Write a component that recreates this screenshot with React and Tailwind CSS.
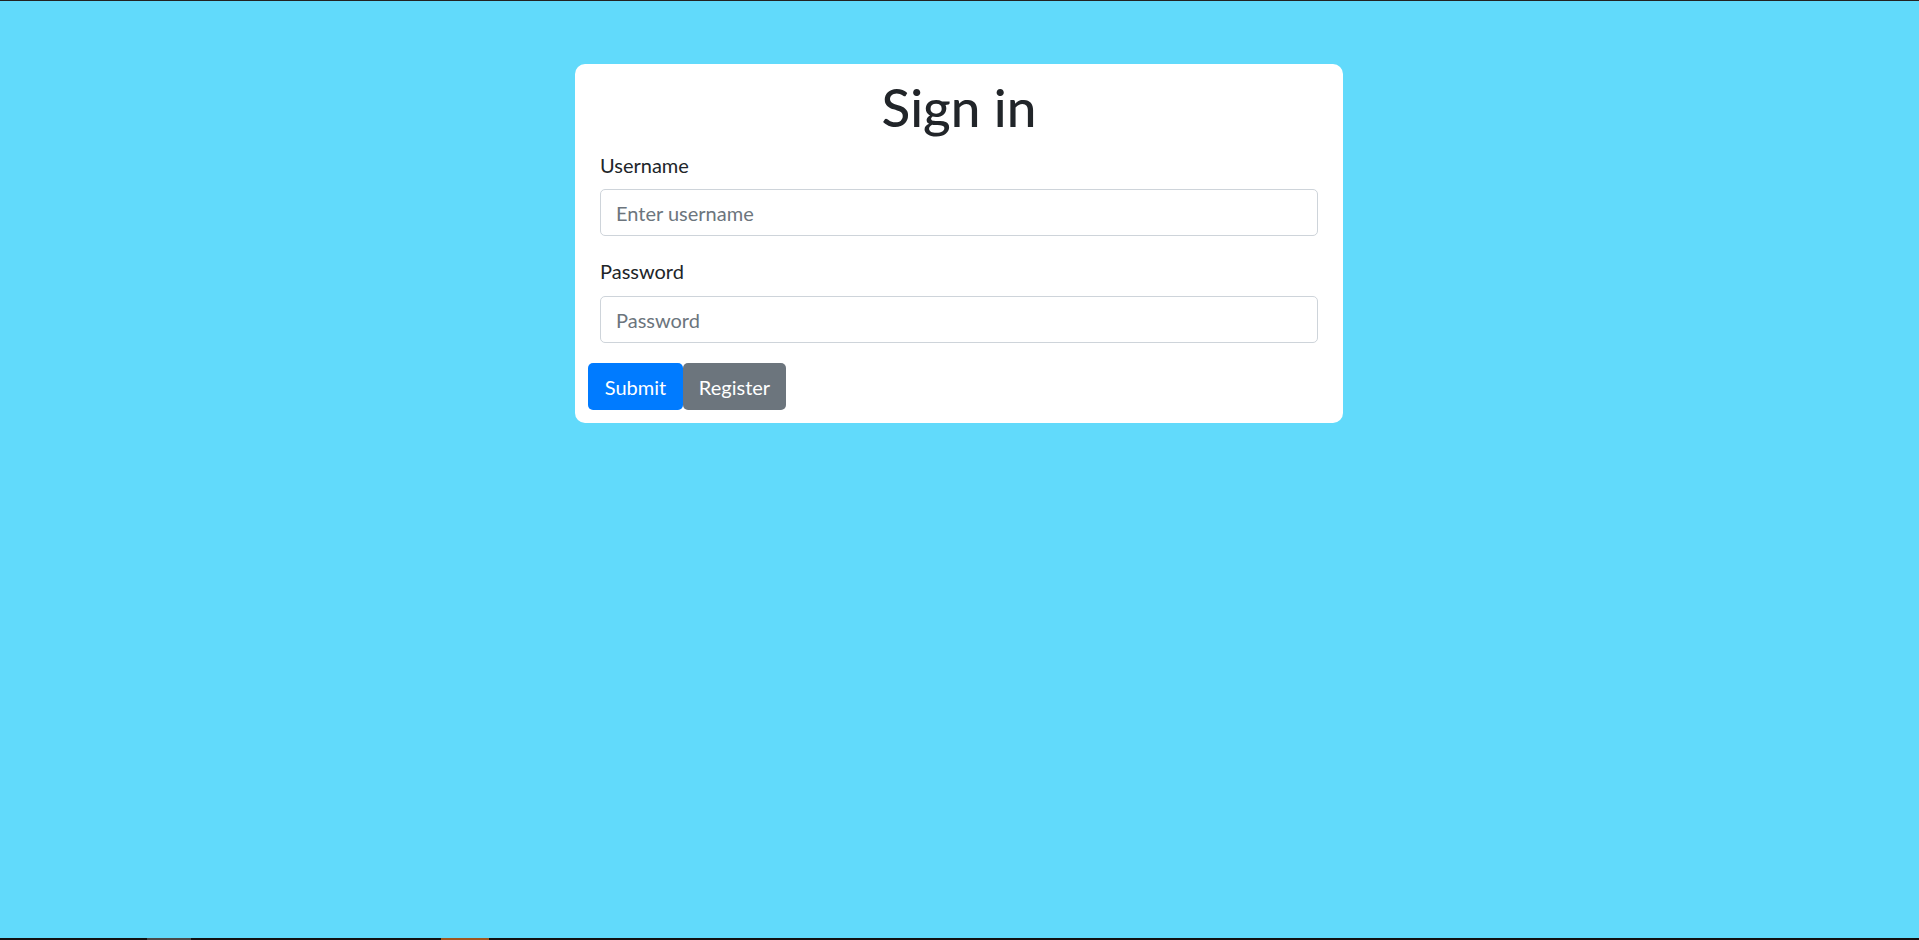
import React from "react";

const SignIn = () => {
  return (
    <div className="ml-[575px] mt-[63px] w-[768px] rounded-[10px] bg-white px-[13px] pt-[8px] pb-[13px] text-[#212529]">
      <h1 className="pt-[2px] text-center text-[53px] font-medium leading-[66px]">Sign in</h1>
      <form className="mt-[10px]" onSubmit={(e) => e.preventDefault()}>
        <div className="mb-[20px] px-[12px]">
          <label className="mb-[9px] block text-[20px] leading-[30px]">Username</label>
          <input
            type="text"
            placeholder="Enter username"
            className="block h-[47px] w-full rounded-[5px] border border-[#ced4da] px-[15px] text-[20px] placeholder:text-[#6c757d] outline-none"
          />
        </div>
        <div className="mb-[20px] px-[12px]">
          <label className="mb-[10px] block text-[20px] leading-[30px]">Password</label>
          <input
            type="password"
            placeholder="Password"
            className="block h-[47px] w-full rounded-[5px] border border-[#ced4da] px-[15px] text-[20px] placeholder:text-[#6c757d] outline-none"
          />
        </div>
        <div className="flex">
          <button type="submit" className="h-[47px] w-[95px] rounded-[5px] bg-[#007bff] text-[20px] text-white">
            Submit
          </button>
          <button type="button" className="h-[47px] w-[103px] rounded-[5px] bg-[#6c757d] text-[20px] text-white">
            Register
          </button>
        </div>
      </form>
    </div>
  );
};

export default function App() {
  return (
    <div
      className="flex h-[940px] w-full flex-col overflow-hidden"
      style={{ fontFamily: "Lato, 'Open Sans', sans-serif" }}
    >
      <div className="h-px bg-[#222]" />
      <div className="flex-1 bg-[#61dafb]">
        <SignIn />
      </div>
      <div className="flex h-[2px] bg-[#111]">
        <div className="ml-[147px] w-[44px] bg-[#4a4a4a]" />
        <div className="ml-[250px] w-[48px] bg-[#a0561f]" />
      </div>
    </div>
  );
}
